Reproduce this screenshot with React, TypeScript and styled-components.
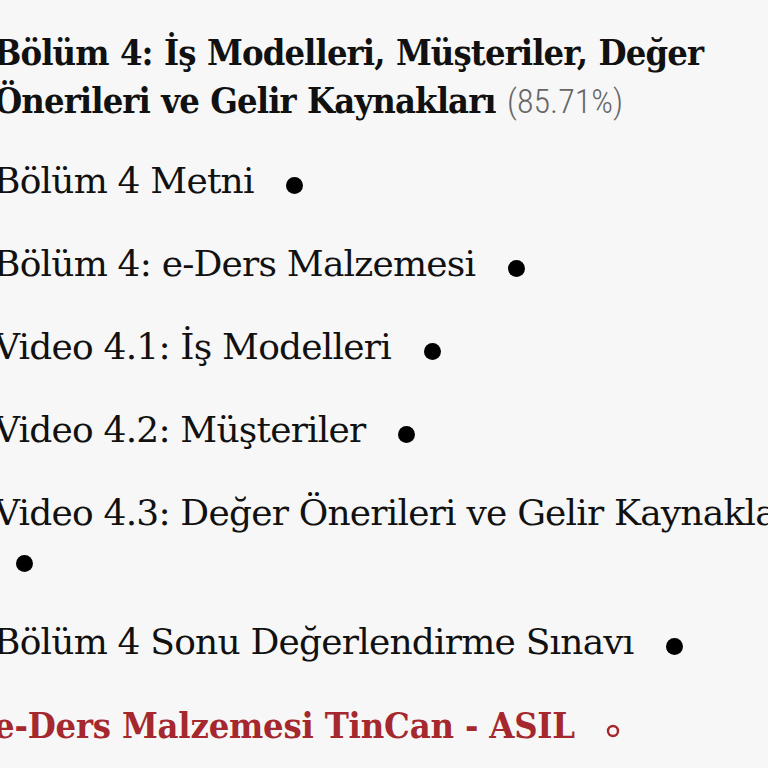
import React from 'react'
import styled, { createGlobalStyle } from 'styled-components'

const GlobalStyle = createGlobalStyle`
  html, body {
    margin: 0;
    padding: 0;
    background: #f7f7f7;
    overflow: hidden;
  }
`

const Page = styled.div`
  width: 830px;
  margin-left: -6px;
  padding-top: 28px;
  font-family: 'DejaVu Serif', 'Liberation Serif', serif;
  color: #111;
`

const Title = styled.h2`
  margin: 0 0 33px 0;
  font-size: 36px;
  line-height: 48px;
  font-weight: 700;
  font-stretch: condensed;
  letter-spacing: -0.9px;
  word-spacing: 1px;
`

const Percent = styled.span`
  font-family: Roboto, 'Liberation Sans', sans-serif;
  font-weight: 300;
  font-size: 34px;
  letter-spacing: 0;
  color: #666;
`

const List = styled.ul`
  list-style: none;
  margin: 0;
  padding: 0;
  display: flex;
  flex-direction: column;
  gap: 37px;
`

const Item = styled.li<{ $active?: boolean }>`
  font-size: 36px;
  line-height: 46px;
  font-weight: ${({ $active }) => ($active ? 700 : 400)};
  font-stretch: ${({ $active }) => ($active ? 'condensed' : 'normal')};
  letter-spacing: ${({ $active }) => ($active ? '-0.2px' : '-0.8px')};
  color: ${({ $active }) => ($active ? '#a5282e' : '#111')};
`

const Dot = styled.svg<{ $hollow?: boolean }>`
  display: inline-block;
  width: ${({ $hollow }) => ($hollow ? '14px' : '17px')};
  height: ${({ $hollow }) => ($hollow ? '14px' : '17px')};
  margin-left: ${({ $hollow }) => ($hollow ? '20px' : '22px')};
  vertical-align: ${({ $hollow }) => ($hollow ? '0' : '-1px')};
`

const items = [
  { title: 'Bölüm 4 Metni', done: true },
  { title: 'Bölüm 4: e-Ders Malzemesi', done: true },
  { title: 'Video 4.1: İş Modelleri', done: true },
  { title: 'Video 4.2: Müşteriler', done: true },
  { title: 'Video 4.3: Değer Önerileri ve Gelir Kaynakları', done: true },
  { title: 'Bölüm 4 Sonu Değerlendirme Sınavı', done: true },
  { title: 'e-Ders Malzemesi TinCan - ASIL', done: false, active: true }
]

function StatusDot({ done }: { done: boolean }) {
  if (!done) {
    return (
      <Dot $hollow viewBox="0 0 14 14">
        <circle cx="7" cy="7" r="5" fill="none" stroke="#a5282e" strokeWidth="2.4" />
      </Dot>
    )
  }
  return (
    <Dot viewBox="0 0 17 17">
      <circle cx="8.5" cy="8.5" r="8.5" fill="#000" />
    </Dot>
  )
}

export default function App() {
  return (
    <>
      <GlobalStyle />
      <Page>
        <Title>
          Bölüm 4: İş Modelleri, Müşteriler, Değer Önerileri ve Gelir Kaynakları <Percent>(85.71%)</Percent>
        </Title>
        <List>
          {items.map(item => (
            <Item key={item.title} $active={item.active}>
              {item.title} <StatusDot done={item.done} />
            </Item>
          ))}
        </List>
      </Page>
    </>
  )
}
